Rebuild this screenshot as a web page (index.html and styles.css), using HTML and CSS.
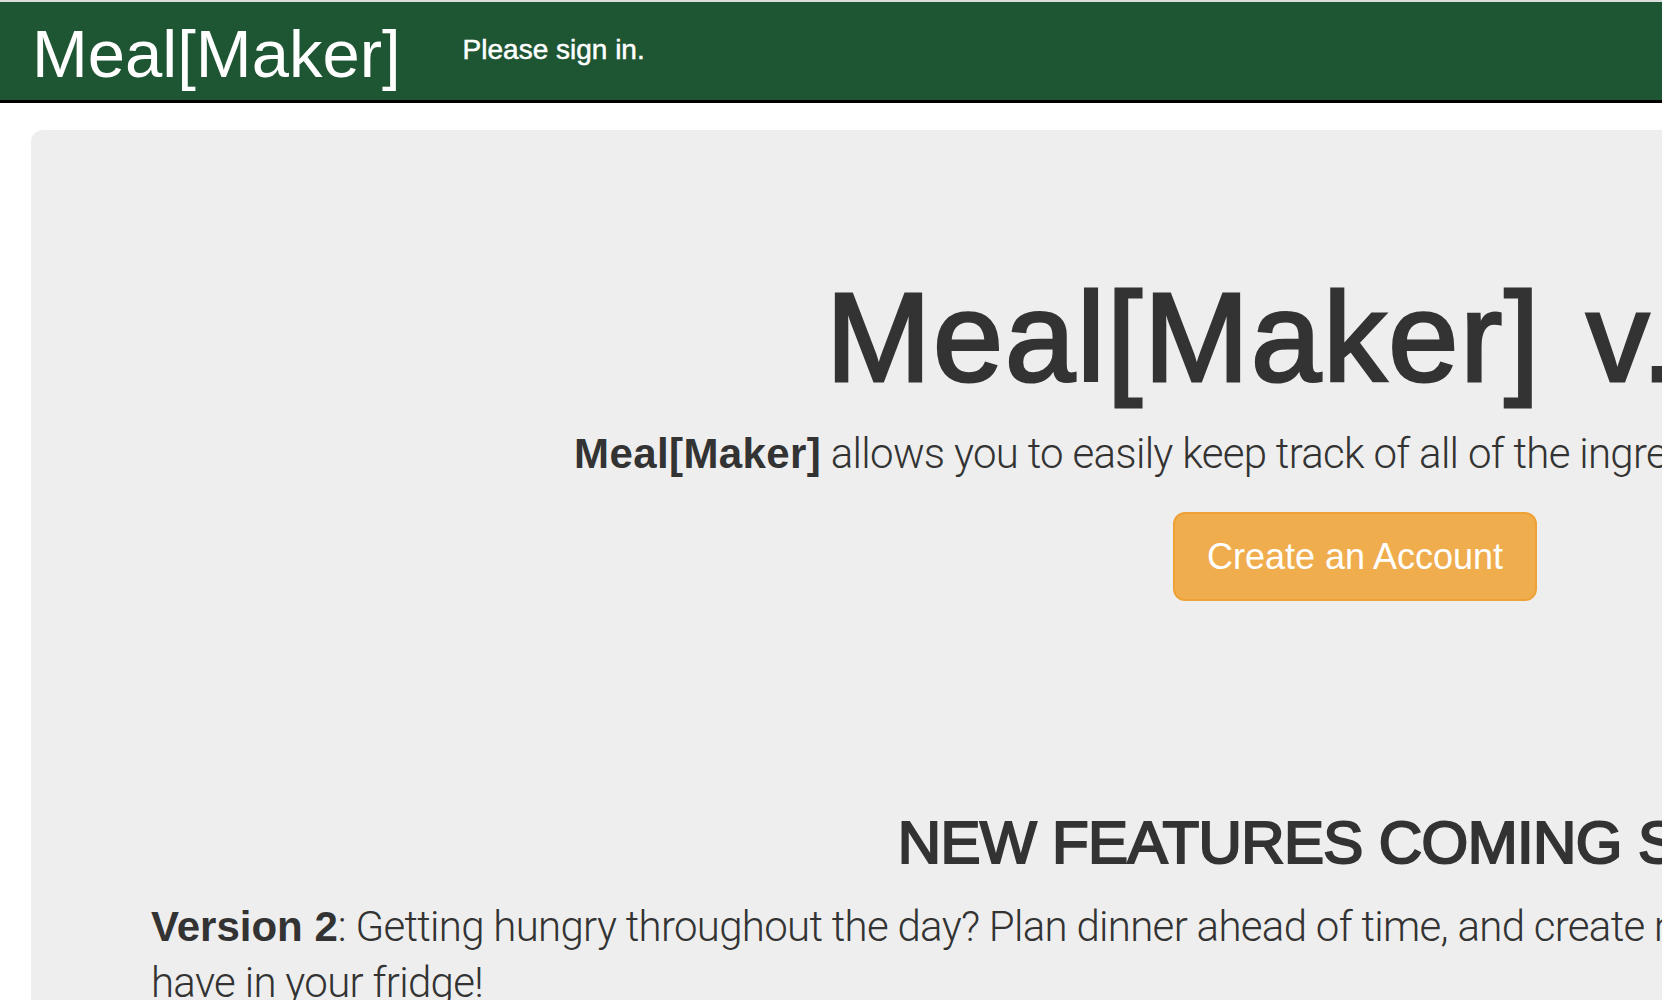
FILE: index.html
```html
<!DOCTYPE html>
<html lang="en">
<head>
<meta charset="utf-8">
<title>Meal[Maker]</title>
<link rel="stylesheet" href="styles.css">
</head>
<body>
<nav class="navbar">
  <a class="brand" href="#">Meal[Maker]</a>
  <span class="navbar-text">Please sign in.</span>
</nav>
<main class="container">
  <section class="jumbotron">
    <h1 class="title">Meal[Maker] v.1.0</h1>
    <p class="lead"><strong>Meal[Maker]</strong> allows you to easily keep track of all of the ingredients in your home fridge.</p>
    <div class="actions">
      <a class="btn btn-warning" href="#">Create an Account</a>
    </div>
    <h2 class="section-title">NEW FEATURES COMING SOON</h2>
    <p class="feature"><strong>Version 2</strong>: Getting hungry throughout the day? Plan dinner ahead of time, and create meals based on the ingredients you<br>have in your fridge!</p>
  </section>
</main>
</body>
</html>
```
FILE: styles.css
```css
html {
  overflow: hidden;
}

body {
  margin: 0;
  font-family: "Liberation Sans", Arial, sans-serif;
  color: #333333;
  background: #ffffff;
}

.navbar {
  display: flex;
  align-items: flex-start;
  box-sizing: border-box;
  height: 103px;
  background: #1e5532;
  border-top: 2px solid #dcdcdc;
  border-bottom: 3px solid #000000;
}

.brand {
  margin-left: 32px;
  padding-top: 6px;
  font-size: 67px;
  line-height: 92px;
  color: #ffffff;
  text-decoration: none;
}

.navbar-text {
  margin-left: 62px;
  font-size: 28px;
  line-height: 96px;
  color: #ffffff;
  -webkit-text-stroke: 0.5px #ffffff;
}

.container {
  width: 2648px;
  margin-left: 31px;
  padding-top: 27px;
}

.jumbotron {
  background: #eeeeee;
  border-radius: 12px;
  padding: 138px 120px 120px;
  min-height: 1000px;
  text-align: center;
}

.title {
  margin: 0;
  padding-right: 24px;
  font-size: 126px;
  line-height: 139px;
  font-weight: 400;
  letter-spacing: 2px;
  word-spacing: 8px;
  -webkit-text-stroke: 3px #333333;
}

.lead {
  margin: 17px 0 0;
  font-family: "Roboto", "Liberation Sans", sans-serif;
  font-weight: 300;
  font-size: 42px;
  line-height: 60px;
  letter-spacing: -0.7px;
}

.lead strong {
  font-family: "Liberation Sans", Arial, sans-serif;
  font-weight: 700;
  letter-spacing: 0.4px;
}

.feature strong {
  font-family: "Liberation Sans", Arial, sans-serif;
  font-weight: 700;
  letter-spacing: 0;
}

.actions {
  margin-top: 28px;
  display: flex;
  justify-content: center;
}

.btn {
  display: inline-block;
  box-sizing: border-box;
  padding: 20px 32px;
  font-size: 36px;
  line-height: 45px;
  border: 2px solid #eea236;
  border-radius: 12px;
  background: #f0ad4e;
  color: #ffffff;
  text-decoration: none;
}

.section-title {
  margin: 209px 0 0;
  font-size: 60px;
  line-height: 66px;
  font-weight: 400;
  letter-spacing: -0.6px;
  -webkit-text-stroke: 2.2px #333333;
}

.feature {
  margin: 23px 0 0;
  text-align: left;
  font-family: "Roboto", "Liberation Sans", sans-serif;
  font-weight: 300;
  font-size: 42px;
  line-height: 56px;
  letter-spacing: -0.7px;
}
```
